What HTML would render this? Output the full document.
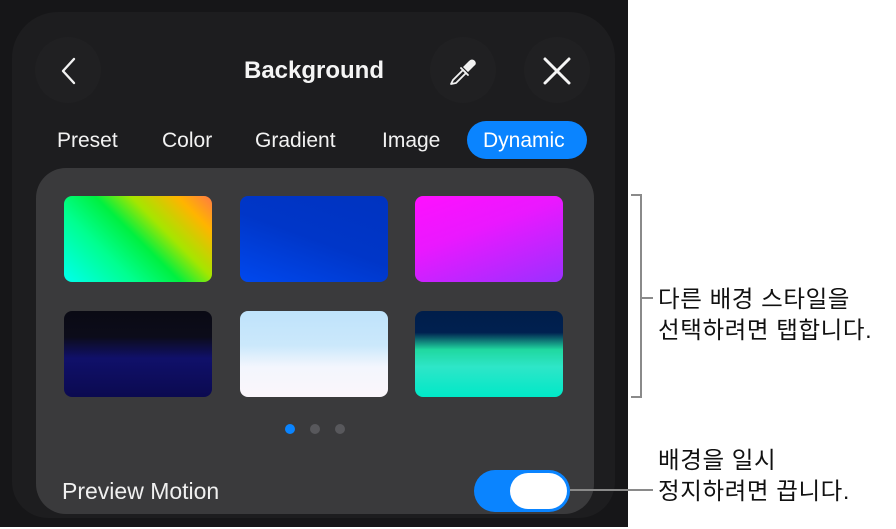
<!DOCTYPE html>
<html><head><meta charset="utf-8"><style>
*{margin:0;padding:0;box-sizing:border-box}
body{width:896px;height:529px;background:#fff;position:relative;overflow:hidden;font-family:"Liberation Sans","Noto Sans CJK KR",sans-serif}
.abs{position:absolute}
#outer{left:0;top:0;width:628px;height:527px;background:#161618}
#panel{left:12px;top:12px;width:603px;height:506px;background:#1d1d1f;border-radius:46px 46px 36px 36px}
.circ{width:66px;height:66px;border-radius:50%;background:#202022}
#card{left:36px;top:168px;width:558px;height:346px;background:#3a3a3c;border-radius:30px}
.th{width:148px;height:86px;border-radius:8px}
.tab{color:#f2f2f2;font-size:21px;top:129px}
.ko{color:#111;font-size:23.5px;line-height:31px;letter-spacing:0.6px;white-space:nowrap}
.ln{background:#8a8a8a}
</style></head><body>
<div id="outer" class="abs"></div>
<div id="panel" class="abs"></div>
<div class="abs circ" style="left:35px;top:37px"></div>
<div class="abs circ" style="left:430px;top:37px"></div>
<div class="abs circ" style="left:524px;top:37px"></div>
<svg class="abs" style="left:55px;top:56px" width="26" height="30"><path d="M19 3 L8 15 L19 27" fill="none" stroke="#f2f2f2" stroke-width="2.4" stroke-linecap="round" stroke-linejoin="round"/></svg>
<div class="abs" style="left:200px;top:57px;width:228px;text-align:center;color:#f5f5f5;font-size:24px;font-weight:bold">Background</div>
<svg class="abs" style="left:448px;top:56px" width="30" height="30"><g fill="none" stroke="#f2f2f2" stroke-width="1.8" stroke-linecap="round" stroke-linejoin="round"><path d="M3 28 L5 24 L15 14 L18 17 L8 27 Z"/><path d="M13 12 L20 19"/></g><path d="M15 11 L21 5 Q24 2 27 5 Q29 8 26 10 L20 16 Z" fill="#f2f2f2"/></svg>
<svg class="abs" style="left:543px;top:57px" width="28" height="28"><path d="M2 2 L26 26 M26 2 L2 26" stroke="#f5f5f5" stroke-width="3" stroke-linecap="round"/></svg>
<div class="abs tab" style="left:57px">Preset</div>
<div class="abs tab" style="left:162px">Color</div>
<div class="abs tab" style="left:255px">Gradient</div>
<div class="abs tab" style="left:382px">Image</div>
<div class="abs" style="left:467px;top:121px;width:120px;height:38px;border-radius:19px;background:#0a84ff"></div>
<div class="abs tab" style="left:483px;color:#fff">Dynamic</div>
<div id="card" class="abs"></div>
<div class="abs th" style="left:64px;top:196px;background:linear-gradient(225deg,#ff7a45 0%,#ffb400 15%,#a4e600 35%,#00f040 50%,#00ff90 70%,#00ffee 100%)"></div>
<div class="abs th" style="left:240px;top:196px;background:linear-gradient(200deg,#0033c0 0%,#0036c8 50%,#0048ee 100%)"></div>
<div class="abs th" style="left:415px;top:196px;background:linear-gradient(160deg,#ff10ff 0%,#ea18ff 40%,#9a30ff 100%)"></div>
<div class="abs th" style="left:64px;top:311px;background:linear-gradient(180deg,#0a0a14 0%,#0c0c1a 30%,#10106a 55%,#0b0a50 100%)"></div>
<div class="abs th" style="left:240px;top:311px;background:linear-gradient(180deg,#bfe3fb 0%,#cbe8fb 40%,#f3f6fd 65%,#fbf6fb 100%)"></div>
<div class="abs th" style="left:415px;top:311px;background:linear-gradient(180deg,#001e4a 0%,#002050 25%,#20d8a0 45%,#2ee6c8 65%,#00e8c8 100%)"></div>
<div class="abs" style="left:285px;top:424px;width:10px;height:10px;border-radius:50%;background:#0a84ff"></div>
<div class="abs" style="left:310px;top:424px;width:10px;height:10px;border-radius:50%;background:#58585c"></div>
<div class="abs" style="left:335px;top:424px;width:10px;height:10px;border-radius:50%;background:#58585c"></div>
<div class="abs" style="left:62px;top:478px;color:#f0f0f0;font-size:23px">Preview Motion</div>
<div class="abs" style="left:474px;top:470px;width:96px;height:42px;border-radius:21px;background:#0a84ff"></div>
<div class="abs" style="left:510px;top:473px;width:57px;height:36px;border-radius:18px;background:#fff"></div>
<div class="abs ln" style="left:570px;top:489px;width:83px;height:2px"></div>
<div class="abs ln" style="left:631px;top:194px;width:11px;height:2px"></div>
<div class="abs ln" style="left:631px;top:396px;width:11px;height:2px"></div>
<div class="abs ln" style="left:640px;top:194px;width:2px;height:204px"></div>
<div class="abs ln" style="left:640px;top:297px;width:13px;height:2px"></div>
<div class="abs ko" style="left:658px;top:284px">다른 배경 스타일을<br>선택하려면 탭합니다.</div>
<div class="abs ko" style="left:658px;top:445px">배경을 일시<br>정지하려면 끕니다.</div>
</body></html>
